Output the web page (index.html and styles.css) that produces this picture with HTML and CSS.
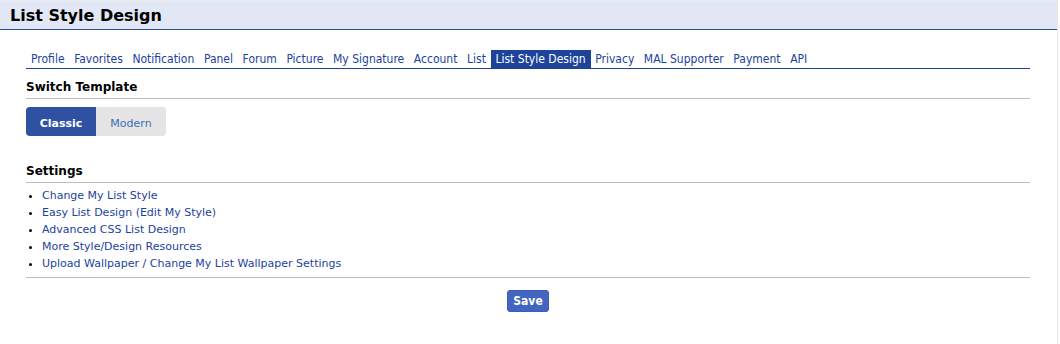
FILE: index.html
```html
<!DOCTYPE html>
<html lang="en">
<head>
    <meta charset="UTF-8">
    <title>List Style Design</title>
    <link rel="stylesheet" href="styles.css">
</head>
<body>
    <div class="page">
        <h1 class="page-title">List Style Design</h1>
        <div class="content">
            <ul class="tabs">
                <li><a href="#">Profile</a></li>
                <li><a href="#">Favorites</a></li>
                <li><a href="#">Notification</a></li>
                <li><a href="#">Panel</a></li>
                <li><a href="#">Forum</a></li>
                <li><a href="#">Picture</a></li>
                <li><a href="#">My Signature</a></li>
                <li><a href="#">Account</a></li>
                <li><a href="#">List</a></li>
                <li><a href="#" class="active">List Style Design</a></li>
                <li><a href="#">Privacy</a></li>
                <li><a href="#">MAL Supporter</a></li>
                <li><a href="#">Payment</a></li>
                <li><a href="#">API</a></li>
            </ul>

            <h2 class="section-title">Switch Template</h2>
            <div class="switch">
                <button type="button" class="switch-btn on">Classic</button>
                <button type="button" class="switch-btn">Modern</button>
            </div>

            <h2 class="section-title settings-title">Settings</h2>
            <ul class="links">
                <li><a href="#">Change My List Style</a></li>
                <li><a href="#">Easy List Design (Edit My Style)</a></li>
                <li><a href="#">Advanced CSS List Design</a></li>
                <li><a href="#">More Style/Design Resources</a></li>
                <li><a href="#">Upload Wallpaper / Change My List Wallpaper Settings</a></li>
            </ul>

            <div class="actions">
                <button type="submit" class="save-btn">Save</button>
            </div>
        </div>
    </div>
</body>
</html>
```

FILE: styles.css
```css
body {
    margin: 0;
    background: #fff;
    font-family: "DejaVu Sans", Verdana, sans-serif;
    font-size: 11px;
    color: #000;
}
a {
    color: #1c439b;
    text-decoration: none;
}
.page {
    width: 1058px;
    height: 344px;
    border-right: 1px solid #e6e6e6;
    border-top: 1px solid #ebebeb;
    box-sizing: border-box;
}
.page-title {
    margin: 0;
    height: 29px;
    padding: 5px 0 0 10px;
    box-sizing: border-box;
    background: #e1e7f5;
    border-bottom: 1px solid #2e51a2;
    font-size: 16px;
    font-weight: bold;
    color: #000;
}
.content {
    padding: 20px 27px 0 26px;
}
.tabs {
    list-style: none;
    margin: 0;
    padding: 0;
    display: flex;
    border-bottom: 1px solid #1d439b;
    font-family: "DejaVu Sans Condensed", "DejaVu Sans", sans-serif;
    font-size: 12px;
}
.tabs a {
    display: block;
    padding: 2px 5px 1px 4.6px;
    line-height: 15px;
}
.tabs li:first-child a {
    padding-left: 5px;
}
.tabs a.active {
    background: #1d439b;
    color: #fff;
}
.section-title {
    margin: 11px 0 0;
    padding-bottom: 4px;
    border-bottom: 1px solid #bebebe;
    font-size: 12px;
    font-weight: bold;
    color: #000;
}
.settings-title {
    margin-top: 28px;
}
.switch {
    display: inline-flex;
    margin-top: 8px;
    border-radius: 4px;
    overflow: hidden;
    background: #e5e5e5;
}
.switch-btn {
    border: none;
    height: 29px;
    width: 70px;
    padding: 3px 0 0;
    background: #e5e5e5;
    color: #3c6db0;
    font-family: inherit;
    font-size: 11px;
    cursor: pointer;
}
.switch-btn.on {
    background: #2e51a2;
    color: #fff;
    font-weight: bold;
}
.links {
    margin: 0;
    padding: 4px 0 5px 16px;
    border-bottom: 1px solid #bebebe;
}
.links li {
    line-height: 17px;
}
.actions {
    text-align: center;
    padding-top: 12px;
}
.save-btn {
    height: 22px;
    width: 42px;
    padding: 0;
    border: 1px solid #3a5eb5;
    border-radius: 3px;
    background: #4165c0;
    color: #fff;
    font-family: "DejaVu Sans Condensed", "DejaVu Sans", sans-serif;
    font-size: 12px;
    font-weight: bold;
    cursor: pointer;
}
```
